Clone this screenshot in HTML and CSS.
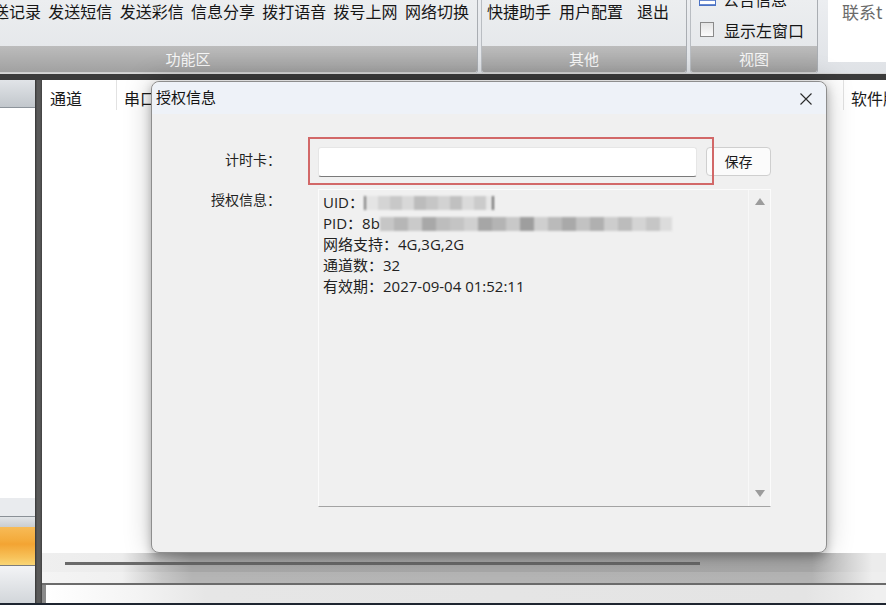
FILE: index.html
```html
<!DOCTYPE html>
<html lang="zh-CN">
<head>
<meta charset="utf-8">
<title>授权信息</title>
<link rel="stylesheet" href="styles.css">
</head>
<body>
<div class="ribbon">
  <div class="group g1">
    <div class="items">
      <span class="item">发送记录</span>
      <span class="item">发送短信</span>
      <span class="item">发送彩信</span>
      <span class="item">信息分享</span>
      <span class="item">拨打语音</span>
      <span class="item">拨号上网</span>
      <span class="item">网络切换</span>
    </div>
    <div class="glabel">功能区</div>
  </div>
  <div class="group g2">
    <div class="items">
      <span class="item">快捷助手</span>
      <span class="item">用户配置</span>
      <span class="item exit">退出</span>
    </div>
    <div class="glabel">其他</div>
  </div>
  <div class="group g3">
    <div class="checks">
      <div class="check"><span class="docicon"></span><span>公告信息</span></div>
      <div class="check"><span class="box"></span><span>显示左窗口</span></div>
    </div>
    <div class="glabel">视图</div>
  </div>
  <div class="contact">联系t</div>
</div>
<div class="darkbar"></div>
<div class="main">
  <div class="leftpanel">
    <div class="lp-head"></div>
    <div class="lp-body"></div>
    <div class="lp-item"></div>
    <div class="lp-band"></div>
    <div class="lp-orange"></div>
    <div class="lp-foot"></div>
  </div>
  <div class="splitter"></div>
  <div class="content">
    <div class="list">
      <div class="list-head">
        <div class="col c1">通道</div>
        <div class="col c2">串口</div>
        <div class="col c3">软件版</div>
      </div>
    </div>
    <div class="hscroll"><div class="thumb"></div></div>
    <div class="band"></div>
    <div class="inputbar"></div>
  </div>
</div>

<div class="dialog">
  <div class="dlg-title">
    <span class="dlg-name">授权信息</span>
    <svg class="close" width="12" height="12" viewBox="0 0 12 12"><path d="M0.5 0.5 L11.5 11.5 M11.5 0.5 L0.5 11.5" stroke="#2a2a2a" stroke-width="1.1" fill="none"/></svg>
  </div>
  <div class="dlg-body">
    <div class="lbl">计时卡：</div>
    <div class="inrow">
      <div class="input"></div>
      <div class="btn">保存</div>
    </div>
    <div class="lbl">授权信息：</div>
    <div class="info">
      <div class="info-text">
        <div class="line">UID：<span class="mosaic m1"></span></div>
        <div class="line">PID：8b<span class="mosaic m2"></span></div>
        <div class="line">网络支持：4G,3G,2G</div>
        <div class="line">通道数：32</div>
        <div class="line">有效期：2027-09-04 01:52:11</div>
      </div>
      <div class="vscroll">
        <span class="arrow up"></span>
        <span class="arrow down"></span>
      </div>
    </div>
  </div>
  <div class="redbox"></div>
</div>
</body>
</html>
```

FILE: styles.css
```css
* { box-sizing: border-box; }
html, body { margin: 0; padding: 0; }
body {
  width: 886px;
  height: 605px;
  overflow: hidden;
  position: relative;
  background: #1e2530;
  font-family: "Noto Sans CJK SC", "Noto Sans", sans-serif;
  color: #1a1a1a;
}

/* ribbon */
.ribbon {
  display: flex;
  gap: 3px;
  height: 74px;
  background: linear-gradient(#eceef1, #dfe2e6);
  border-bottom: 1px solid #d6d6d6;
  overflow: hidden;
}
.group {
  display: flex;
  flex-direction: column;
  border-left: 1px solid #b9bdc2;
  border-right: 1px solid #a9adb2;
  border-radius: 0 0 3px 3px;
  background: linear-gradient(#eceef0, #e2e5e8);
  flex: none;
  overflow: hidden;
  height: 73px;
}
.g1 { margin-left: -102px; width: 580px; }
.g2 { width: 206px; }
.g3 { width: 128px; }
.items {
  height: 46px;
  display: flex;
  align-items: flex-start;
  gap: 7.3px;
  padding-top: 1px;
  font-size: 16px;
  line-height: 20px;
  white-space: nowrap;
  color: #161616;
}
.g1 .items { padding-left: 78px; }
.g2 .items { padding-left: 5px; gap: 8px; }
.g2 .exit { margin-left: 6px; }
.glabel {
  height: 27px;
  line-height: 26px;
  text-align: center;
  font-size: 15px;
  color: #f6f6f6;
  background: linear-gradient(#bcbcbc, #a1a1a1);
  border-bottom: 1px solid #cfcfcf;
  border-radius: 0 0 3px 3px;
}
.checks {
  height: 46px;
  padding-left: 9px;
  overflow: hidden;
}
.check {
  height: 31px;
  display: flex;
  align-items: center;
  font-size: 16px;
  white-space: nowrap;
  color: #161616;
}
.check:first-child { margin-top: -17px; }
.box {
  width: 14px;
  height: 15px;
  border: 1px solid #8a8a8a;
  background: linear-gradient(#e4e4e4, #fbfbfb);
  margin-right: 10px;
  flex: none;
}
.docicon {
  width: 17px;
  height: 14px;
  border: 1px solid #4a72c4;
  background: repeating-linear-gradient(#fff 0 3px, #6a8ad0 3px 4px);
  margin-right: 7px;
  margin-left: -1px;
  flex: none;
}
.contact {
  flex: 1;
  margin-left: 7px;
  height: 62px;
  background: #fff;
  padding: 1px 0 0 14px;
  font-size: 17px;
  line-height: 22px;
  color: #6a6a6a;
  white-space: nowrap;
  overflow: hidden;
}
.darkbar {
  height: 6px;
  background: #3b3b3b;
}

/* main */
.main {
  display: flex;
  height: 523px;
}
.leftpanel {
  width: 35px;
  display: flex;
  flex-direction: column;
  background: #fff;
}
.lp-head {
  height: 28px;
  background: linear-gradient(#e1e4e8, #c2c7cc);
  border-bottom: 1px solid #8d949b;
}
.lp-body { flex: 1; background: #fff; }
.lp-item { height: 18px; background: #e9ebee; }
.lp-band {
  height: 11px;
  border-top: 1px solid #8a9096;
  background: linear-gradient(#e2e5e8, #c9cdd1);
}
.lp-orange {
  height: 39px;
  background: linear-gradient(#f7bb57, #f4ab3c 35%, #f3a433 45%, #f7c25a 80%, #fad676);
  border-bottom: 1px solid #7d7d7d;
}
.lp-foot {
  height: 37px;
  background: linear-gradient(#f3f4f6, #d2d6da);
}
.splitter {
  width: 7px;
  background: linear-gradient(90deg, #353535, #5a5a5a 30%, #5a5a5a 70%, #404040);
}
.content {
  flex: 1;
  display: flex;
  flex-direction: column;
}
.list {
  height: 473px;
  background: #fff;
}
.list-head {
  height: 30px;
  display: flex;
  font-size: 16px;
  line-height: 20px;
}
.col {
  padding: 8px 0 0 7px;
  white-space: nowrap;
  overflow: hidden;
}
.c1 { width: 75px; padding-left: 8px; border-right: 1px solid #e2e2e2; }
.c2 { width: 100px; }
.c3 { margin-left: auto; width: 43px; border-left: 1px solid #e2e2e2; }
.hscroll {
  height: 19px;
  background: linear-gradient(90deg, #efefef 0, #ececec 80px, #c4c4c4 115px, #aaaaaa 150px, #a8a8a8 770px, #c6c6c6 795px, #ececec 830px);
  padding: 9px 0 0 23px;
}
.thumb {
  width: 635px;
  height: 3px;
  background: #6a6a6a;
}
.band {
  height: 13px;
  background: linear-gradient(90deg, #f4f4f4 0, #f0f0f0 80px, #c8c8c8 120px, #b6b6b6 150px, #b4b4b4 770px, #cdcdcd 795px, #eeeeee 830px);
  border-bottom: 2px solid #6b6b6b;
}
.inputbar {
  height: 18px;
  background: linear-gradient(90deg, #ffffff, #f4f4f4 90px, #e6e6e6 160px, #e4e4e4 760px, #f0f0f0 830px);
  border-left: 4px solid #8a8a8a;
}

/* dialog */
.dialog {
  position: absolute;
  left: 151px;
  top: 81px;
  width: 676px;
  height: 472px;
  border: 1px solid #8e8e8e;
  border-radius: 8px;
  background: #f0f0f0;
  box-shadow: 0 4px 10px rgba(0, 0, 0, 0.25), 0 0 28px rgba(0, 0, 0, 0.22);
}
.dlg-title {
  height: 32px;
  background: #eef2f8;
  border-radius: 8px 8px 0 0;
  display: flex;
  align-items: center;
  justify-content: space-between;
  padding: 0 14px 2px 4px;
}
.dlg-name {
  font-size: 15px;
  line-height: 20px;
  color: #111;
}
.close { margin-top: 3px; }
.dlg-body {
  display: grid;
  grid-template-columns: 129px 1fr;
  column-gap: 37px;
  row-gap: 12px;
  padding: 33px 55px 0 0;
}
.lbl {
  text-align: right;
  font-size: 14px;
  line-height: 20px;
  color: #222;
  padding-top: 2px;
}
.dlg-body .lbl:nth-of-type(3) { padding-top: 0; }
.inrow {
  display: flex;
  gap: 9px;
  align-items: flex-start;
}
.input {
  flex: 1;
  height: 30px;
  background: #fff;
  border: 1px solid #e6e6e6;
  border-bottom: 1px solid #7a7a7a;
  border-radius: 3px;
}
.btn {
  width: 65px;
  height: 29px;
  border: 1px solid #cfcfcf;
  border-radius: 4px;
  background: #fbfbfb;
  font-size: 14px;
  line-height: 27px;
  text-align: center;
  color: #1a1a1a;
}
.info {
  height: 318px;
  display: flex;
  border: 1px solid #fbfbfb;
  border-bottom-color: #a3a3a3;
  background: #f0f0f0;
}
.info-text {
  flex: 1;
  padding: 2px 4px;
  font-family: "Open Sans", "Noto Sans CJK SC", sans-serif;
  font-size: 15px;
  line-height: 21px;
  color: #222;
}
.line { white-space: nowrap; }
.mosaic {
  display: inline-block;
  vertical-align: -2px;
  height: 14px;
  filter: blur(1px);
}
.m1 {
  width: 132px;
  background: linear-gradient(90deg, #7a7a7a 0 2px, #e4e4e4 2px 14px, #d4d4d4 14px 26px, #c8c8c8 26px 38px, #d8d8d8 38px 50px, #bcbcbc 50px 62px, #c6c6c6 62px 74px, #d2d2d2 74px 86px, #c0c0c0 86px 98px, #dadada 98px 110px, #cbcbcb 110px 122px, #e6e6e6 122px 128px, #6a6a6a 128px 130px, #f0f0f0 130px);
}
.m2 {
  width: 292px;
  background: linear-gradient(90deg, #c6c6c6 0 14px, #b6b6b6 14px 28px, #cacaca 28px 42px, #a8a8a8 42px 56px, #bdbdbd 56px 70px, #c4c4c4 70px 84px, #d0d0d0 84px 98px, #a6a6a6 98px 112px, #b4b4b4 112px 126px, #c8c8c8 126px 140px, #9e9e9e 140px 154px, #cfcfcf 154px 168px, #bababa 168px 182px, #a9a9a9 182px 196px, #c2c2c2 196px 210px, #b0b0b0 210px 224px, #cdcdcd 224px 238px, #bcbcbc 238px 252px, #d4d4d4 252px 266px, #c6c6c6 266px 280px, #dcdcdc 280px 292px);
}
.vscroll {
  width: 22px;
  border-left: 1px solid #f8f8f8;
  display: flex;
  flex-direction: column;
  align-items: center;
  justify-content: space-between;
  padding: 8px 0 9px;
}
.arrow {
  width: 0;
  height: 0;
  border-left: 5px solid transparent;
  border-right: 5px solid transparent;
}
.arrow.up { border-bottom: 7px solid #9c9c9c; }
.arrow.down { border-top: 7px solid #9c9c9c; }
.redbox {
  position: absolute;
  left: 156px;
  top: 55px;
  width: 406px;
  height: 48px;
  border: 2px solid #d26868;
}
```
